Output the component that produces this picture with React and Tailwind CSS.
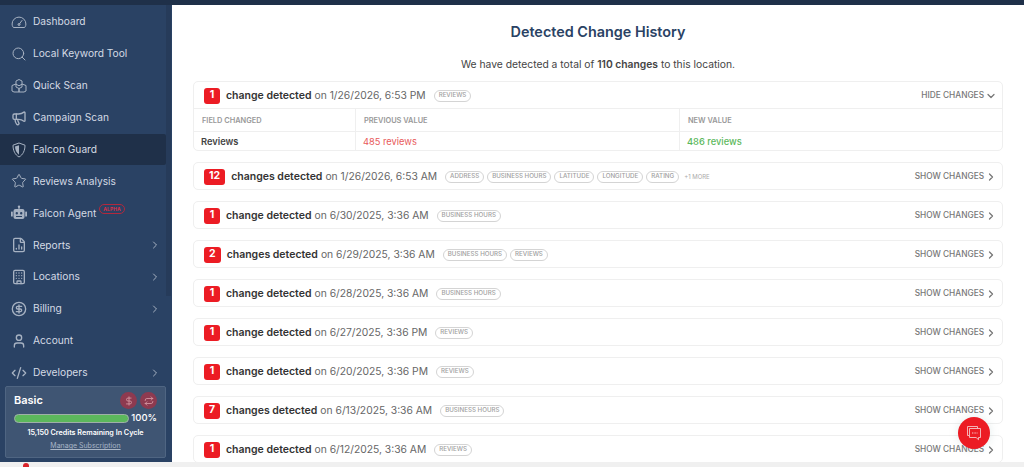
import {
  ChevronDown,
  ChevronRight,
  CodeXml,
  DollarSign,
  FileChartColumn,
  Megaphone,
  Building,
  CircleDollarSign,
  Repeat,
  Search,
  Star,
  User,
} from "lucide-react";

function GaugeIcon(props) {
  return (
    <svg viewBox="0 0 16 16" fill="none" stroke="currentColor" strokeWidth="1.1" {...props}>
      <path d="M3 13.5h10c.8 0 1.1-.4 1.3-.9.4-.8.6-1.6.6-2.6a6.9 6.9 0 1 0-13.8 0c0 1 .2 1.8.6 2.6.2.5.5.9 1.3.9z" />
      <path d="M8 10.5 11 6.5" strokeLinecap="round" />
      <circle cx="8" cy="10.5" r="1" />
    </svg>
  );
}

function ScanIcon(props) {
  return (
    <svg viewBox="0 0 16 16" fill="none" stroke="currentColor" strokeWidth="1" strokeLinejoin="round" {...props}>
      <path d="M8 1.5 11 3v3.2L8 7.8 5 6.2V3z" />
      <path d="M1 7.5 5 6v3l3 1.5V14H3l-2-1z" />
      <path d="M15 7.5 11 6v3L8 10.5V14h5l2-1z" />
    </svg>
  );
}

function ShieldIcon(props) {
  return (
    <svg viewBox="0 0 16 16" stroke="currentColor" strokeWidth="1.2" strokeLinejoin="round" {...props}>
      <path d="M8 1 2 3.2C2 8.5 4 12.8 8 15c4-2.2 6-6.5 6-11.8z" fill="none" />
      <path d="M8 3.2 4 4.6C4.2 8 5.4 10.9 8 12.7z" fill="currentColor" stroke="none" />
    </svg>
  );
}

function RobotIcon(props) {
  return (
    <svg viewBox="0 0 16 16" fill="currentColor" {...props}>
      <circle cx="8" cy="1.8" r="1.2" />
      <rect x="7.4" y="2.4" width="1.2" height="2" />
      <path
        fillRule="evenodd"
        d="M4.5 4h7A2 2 0 0 1 13.5 6v6a2 2 0 0 1-2 2h-7a2 2 0 0 1-2-2V6a2 2 0 0 1 2-2zM5.8 7a1.2 1.2 0 1 0 0 2.4 1.2 1.2 0 0 0 0-2.4zm4.4 0a1.2 1.2 0 1 0 0 2.4 1.2 1.2 0 0 0 0-2.4zM5 11v1h6v-1z"
      />
      <rect x="0" y="6.5" width="1.8" height="5" rx=".6" />
      <rect x="14.2" y="6.5" width="1.8" height="5" rx=".6" />
    </svg>
  );
}

function ChatIcon(props) {
  return (
    <svg viewBox="0 0 16 16" fill="none" stroke="currentColor" strokeWidth="0.9" strokeLinejoin="round" {...props}>
      <path d="M3 10.5H1.5V1.5h10V3.5" />
      <path d="M3.5 3.5h11v9h-2v2.2l-2.4-2.2H3.5z" />
      <path d="M6 8h5.5" strokeDasharray="1 .6" strokeWidth="1.1" />
    </svg>
  );
}

const navItems = [
  { label: "Dashboard", icon: GaugeIcon },
  { label: "Local Keyword Tool", icon: Search },
  { label: "Quick Scan", icon: ScanIcon },
  { label: "Campaign Scan", icon: Megaphone },
  { label: "Falcon Guard", icon: ShieldIcon, active: true },
  { label: "Reviews Analysis", icon: Star },
  { label: "Falcon Agent", icon: RobotIcon, alpha: true },
  { label: "Reports", icon: FileChartColumn, arrow: true },
  { label: "Locations", icon: Building, arrow: true },
  { label: "Billing", icon: CircleDollarSign, arrow: true },
  { label: "Account", icon: User },
  { label: "Developers", icon: CodeXml, arrow: true },
];

const rows = [
  { count: 12, date: "1/26/2026, 6:53 AM", tags: ["ADDRESS", "BUSINESS HOURS", "LATITUDE", "LONGITUDE", "RATING"], more: "+1 MORE" },
  { count: 1, date: "6/30/2025, 3:36 AM", tags: ["BUSINESS HOURS"] },
  { count: 2, date: "6/29/2025, 3:36 AM", tags: ["BUSINESS HOURS", "REVIEWS"] },
  { count: 1, date: "6/28/2025, 3:36 AM", tags: ["BUSINESS HOURS"] },
  { count: 1, date: "6/27/2025, 3:36 PM", tags: ["REVIEWS"] },
  { count: 1, date: "6/20/2025, 3:36 PM", tags: ["REVIEWS"] },
  { count: 7, date: "6/13/2025, 3:36 AM", tags: ["BUSINESS HOURS"] },
  { count: 1, date: "6/12/2025, 3:36 AM", tags: ["REVIEWS"] },
];

function Tag({ children }) {
  return (
    <span className="flex h-[12px] items-center rounded-full border border-[#d4d4d4] px-[4px] text-[6.2px] font-medium leading-none text-[#a0a0a0]">
      {children}
    </span>
  );
}

function RowHeader({ count, date, tags, more, action }) {
  return (
    <div className="flex h-[26px] shrink-0 items-center pl-[10px] pr-[5px] pt-[1px]">
      <span className="mr-[6px] flex h-[16px] min-w-[16px] items-center justify-center rounded-[3px] bg-[#ec1c24] px-[5px] text-[10.5px] font-bold leading-none text-white">
        {count}
      </span>
      <span className="mr-[3px] text-[10.5px] font-semibold text-[#333]">
        {count === 1 ? "change detected" : "changes detected"}
      </span>
      <span className="mr-[8px] text-[10.3px] text-[#666]">on {date}</span>
      <div className="flex items-center gap-[3px]">
        {tags.map((t) => (
          <Tag key={t}>{t}</Tag>
        ))}
        {more && <span className="ml-[2px] text-[6px] text-[#aaa]">{more}</span>}
      </div>
      <div className="ml-auto">{action}</div>
    </div>
  );
}

function Action({ open }) {
  return (
    <span className="flex items-center gap-[1px] text-[8.3px] font-medium text-[#777]">
      {open ? "HIDE CHANGES" : "SHOW CHANGES"}
      {open ? <ChevronDown size={12} strokeWidth={2.5} /> : <ChevronRight size={12} strokeWidth={2.5} />}
    </span>
  );
}

export default function App() {
  return (
    <div className="flex h-screen flex-col overflow-hidden bg-white font-['Inter',sans-serif]">
      <div className="h-[5px] shrink-0 bg-[#1f3049]" />
      <div className="flex min-h-0 flex-1">
        <aside className="flex w-[172px] shrink-0 bg-[#2a4264]">
          <div className="flex w-[166px] flex-col">
            <nav className="flex min-h-0 flex-1 flex-col pt-[1px]">
              {navItems.map((item) => {
                const Icon = item.icon;
                return (
                  <div
                    key={item.label}
                    className={`flex h-[31.9px] shrink-0 items-center pl-[11px] pr-[5px] text-[10.2px] text-[#d5dbe4] ${
                      item.active ? "rounded-r-[2px] bg-[#1f3049]" : ""
                    }`}
                  >
                    <Icon width={16} height={16} strokeWidth={item.icon === Search || item.icon === Star ? 1.5 : undefined} className="mr-[6px] shrink-0 text-[#a7b2c2]" />
                    <span>{item.label}</span>
                    {item.alpha && (
                      <span className="relative top-[-4px] ml-[3px] rounded-full border border-[#b3283c] px-[3px] text-[5px] font-bold leading-[8px] text-[#d8314a]">
                        ALPHA
                      </span>
                    )}
                    {item.arrow && <ChevronRight size={12} className="ml-auto text-[#a7b2c2]" />}
                  </div>
                );
              })}
            </nav>
            <div className="relative mb-[4px] ml-[5px] flex h-[72px] shrink-0 flex-col rounded-[2px] border border-[#4f6582] bg-[#3f5573] px-[8px] pt-[5px]">
              <div className="flex items-center justify-between">
                <span className="text-[11px] font-semibold text-white">Basic</span>
                <div className="flex gap-[3px]">
                  <span className="flex h-[17px] w-[17px] items-center justify-center rounded-full bg-[#8d3a50] text-[#d79aa5]">
                    <DollarSign size={10} />
                  </span>
                  <span className="flex h-[17px] w-[17px] items-center justify-center rounded-full bg-[#8d3a50] text-[#d79aa5]">
                    <Repeat size={10} />
                  </span>
                </div>
              </div>
              <div className="mt-[2px] flex items-center">
                <div className="h-[9px] w-[115px] rounded-full border border-[#9fb0a8] bg-[#5cb85c]" />
                <span className="ml-auto text-[9.5px] font-medium text-white">100%</span>
              </div>
              <div className="mt-[3px] text-center text-[7.2px] font-semibold leading-[10px] text-white">
                15,150 Credits Remaining In Cycle
              </div>
              <div className="mt-[3px] text-center text-[7px] leading-[10px] text-[#a9b6c7] underline">
                Manage Subscription
              </div>
            </div>
          </div>
          <div className="w-[6px]">
            <div className="h-[291px] w-[5px] bg-[#263b5a]" />
          </div>
        </aside>

        <main className="relative min-w-0 flex-1 overflow-hidden bg-white">
          <div className="ml-[21px] w-[810px]">
            <h1 className="mt-[16px] text-center text-[14.4px] font-semibold leading-[22px] text-[#2a4264]">
              Detected Change History
            </h1>
            <p className="mt-[14px] text-center text-[10.3px] leading-[14px] text-[#444]">
              We have detected a total of <b className="font-semibold">110 changes</b> to this location.
            </p>

            <div className="mt-[10px] flex flex-col gap-[11px]">
              <div className="rounded-[5px] border border-[#efefef]">
                <RowHeader
                  count={1}
                  date="1/26/2026, 6:53 PM"
                  tags={["REVIEWS"]}
                  action={<Action open />}
                />
                <div className="grid grid-cols-[161px_324px_1fr] border-t border-[#efefef]">
                  <div className="flex h-[22px] items-center px-[8px] pt-[1px] text-[7.4px] font-semibold text-[#999]">FIELD CHANGED</div>
                  <div className="flex h-[22px] items-center border-l border-[#efefef] px-[8px] pt-[1px] text-[7.4px] font-semibold text-[#999]">PREVIOUS VALUE</div>
                  <div className="flex h-[22px] items-center border-l border-[#efefef] px-[8px] pt-[1px] text-[7.4px] font-semibold text-[#999]">NEW VALUE</div>
                  <div className="flex h-[19px] items-center border-t border-[#efefef] px-[7px] pt-[1px] text-[9.3px] font-semibold text-[#444]">Reviews</div>
                  <div className="flex h-[19px] items-center border-l border-t border-[#efefef] px-[7px] pt-[1px] text-[9.3px] text-[#e8595a]">485 reviews</div>
                  <div className="flex h-[19px] items-center border-l border-t border-[#efefef] px-[7px] pt-[1px] text-[9.3px] font-medium text-[#5cb85c]">486 reviews</div>
                </div>
              </div>

              {rows.map((row) => (
                <div key={row.date} className="shrink-0 rounded-[5px] border border-[#efefef]">
                  <RowHeader {...row} action={<Action />} />
                </div>
              ))}
            </div>
          </div>

          <button className="absolute left-[786px] top-[412px] flex h-[32px] w-[32px] items-center justify-center rounded-full bg-[#ec1c24] text-[#f5c4c6] shadow-[0_0_10px_rgba(120,160,160,0.2)]">
            <ChatIcon width={16} height={16} />
          </button>
        </main>
      </div>
      <div className="relative h-[5px] shrink-0 bg-[#f0f0f0]">
        <span className="absolute left-[23px] top-[1px] h-[4px] w-[6px] rounded-t-full bg-[#d9232a]" />
      </div>
    </div>
  );
}
